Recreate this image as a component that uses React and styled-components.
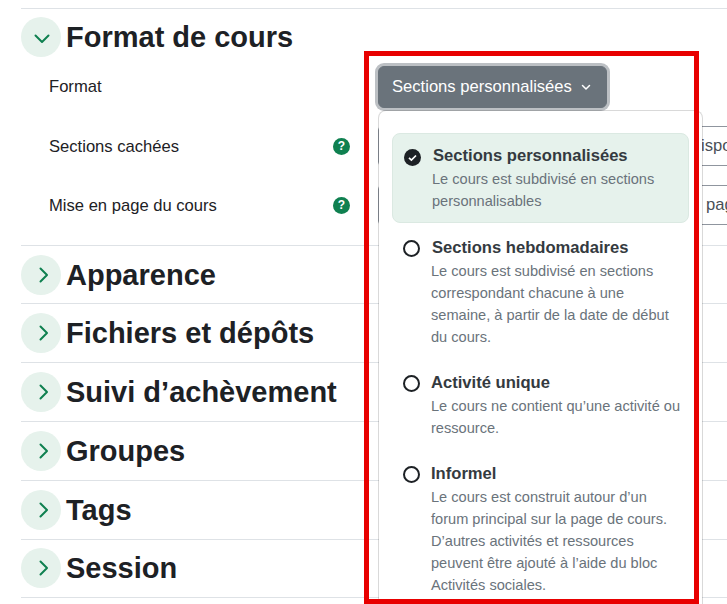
import React from "react";
import styled, { createGlobalStyle } from "styled-components";

const GlobalStyle = createGlobalStyle`
  html, body {
    margin: 0;
    padding: 0;
    background: #fff;
    overflow: hidden;
  }
  body {
    font-family: "Liberation Sans", Arial, sans-serif;
    color: #1d2125;
  }
`;

const Page = styled.div`
  position: relative;
  width: 727px;
  height: 604px;
  overflow: hidden;
  padding: 8px 0 0 21px;
  box-sizing: border-box;
`;

const Section = styled.section`
  border-top: 1px solid #dee2e6;
  height: ${(props) => props.$height}px;
  box-sizing: border-box;
`;

const SectionHead = styled.div`
  display: flex;
  align-items: flex-start;
  gap: 5px;
  padding-top: ${(props) => props.$top}px;
`;

const Toggle = styled.span`
  width: 40px;
  height: 40px;
  border-radius: 50%;
  background: #e6f2ec;
  color: #0f8050;
  display: flex;
  align-items: center;
  justify-content: center;
  flex: none;
`;

const ToggleIcon = styled.svg`
  margin: ${(props) => (props.$open ? "3px 0 0 1px" : "0 0 0 5px")};
`;

const SectionTitle = styled.h3`
  margin: 0;
  height: 40px;
  font-size: 29px;
  line-height: 41px;
  font-weight: 700;
  color: #1d2125;
`;

const Rows = styled.div`
  padding-top: 11px;
`;

const Row = styled.div`
  display: grid;
  grid-template-columns: 284px 45px 1fr;
  height: 59.5px;
  padding-left: 28px;
`;

const RowLabel = styled.div`
  font-size: 16.6px;
  line-height: 24px;
  padding-top: 7px;
`;

const HelpSlot = styled.div`
  padding-top: 10px;
`;

const HelpIcon = styled.span`
  width: 17px;
  height: 17px;
  border-radius: 50%;
  background: #0f8050;
  color: #fff;
  font-size: 12px;
  font-weight: 700;
  line-height: 17px;
  text-align: center;
  display: block;
`;

const SelectBox = styled.div`
  height: 40px;
  margin-top: -2px;
  width: 400px;
  box-sizing: border-box;
  border: 1px solid #8f959e;
  border-radius: 4px;
  font-size: 16.6px;
  line-height: 38px;
  padding-left: ${(props) => props.$inset}px;
  color: #495057;
  white-space: nowrap;
`;

const FormatButton = styled.button`
  position: absolute;
  left: 378px;
  top: 66px;
  width: 229px;
  height: 42px;
  border: 1px solid #6a737b;
  border-radius: 6px;
  background: #6a737b;
  box-shadow: 0 0 0 3px #bcc0c4;
  color: #fff;
  font-family: inherit;
  font-size: 16.6px;
  display: flex;
  align-items: center;
  gap: 9px;
  padding: 0 0 0 13px;
`;

const Menu = styled.div`
  position: absolute;
  left: 378px;
  top: 110px;
  width: 325px;
  height: 520px;
  box-sizing: border-box;
  background: #fff;
  background-clip: padding-box;
  border: 1px solid rgba(0, 0, 0, 0.15);
  border-radius: 8px;
  padding: 22px 13px 0;
`;

const Option = styled.div`
  display: grid;
  grid-template-columns: 28px 1fr;
  padding: ${(props) => (props.$active ? "10px 12px 10px 11px" : "0 0 0 10px")};
  margin-top: ${(props) => props.$gap}px;
  background: ${(props) => (props.$active ? "#e6f2ec" : "transparent")};
  border: 1px solid ${(props) => (props.$active ? "#dbe9e2" : "transparent")};
  border-radius: 8px;
`;

const Radio = styled.span`
  width: 17px;
  height: 17px;
  margin-top: 4px;
  border-radius: 50%;
  box-sizing: border-box;
  border: 2px solid #1d2125;
  display: block;
`;

const CheckedRadio = styled.svg`
  margin-top: 5px;
  display: block;
`;

const OptionTitle = styled.div`
  font-size: 16.6px;
  font-weight: 700;
  line-height: 24px;
  color: #343a40;
  padding-left: ${(props) => props.$inset}px;
`;

const OptionText = styled.div`
  font-size: 14.6px;
  line-height: 22px;
  color: #6a737b;
`;

const RedFrame = styled.div`
  position: absolute;
  left: 364px;
  top: 51px;
  width: 335px;
  height: 553px;
  box-sizing: border-box;
  border: 5px solid #e80000;
  pointer-events: none;
`;

const Chevron = ({ open }) => (
  <ToggleIcon $open={open} width="18" height="18" viewBox="0 0 18 18" fill="none" stroke="currentColor" strokeWidth="2" strokeLinecap="round" strokeLinejoin="round">
    {open ? <path d="M2.5 5.5L9 12l6.5-6.5" /> : <path d="M5.5 2.5L12 9l-6.5 6.5" />}
  </ToggleIcon>
);

const options = [
  { title: "Sections personnalisées", text: ["Le cours est subdivisé en sections", "personnalisables"], active: true, gap: 0, inset: 1 },
  { title: "Sections hebdomadaires", text: ["Le cours est subdivisé en sections", "correspondant chacune à une", "semaine, à partir de la date de début", "du cours."], gap: 12, inset: 1 },
  { title: "Activité unique", text: ["Le cours ne contient qu’une activité ou", "ressource."], gap: 21, inset: 0 },
  { title: "Informel", text: ["Le cours est construit autour d’un", "forum principal sur la page de cours.", "D’autres activités et ressources", "peuvent être ajouté à l’aide du bloc", "Activités sociales."], gap: 21, inset: 0 },
];

const closedSections = [
  { title: "Apparence", height: 58, top: 9 },
  { title: "Fichiers et dépôts", height: 59, top: 9 },
  { title: "Suivi d’achèvement", height: 59, top: 9 },
  { title: "Groupes", height: 59, top: 9 },
  { title: "Tags", height: 59, top: 9 },
  { title: "Session", height: 58, top: 8 },
];

export default function App() {
  return (
    <>
      <GlobalStyle />
      <Page>
        <Section $height={237}>
          <SectionHead $top={8}>
            <Toggle><Chevron open /></Toggle>
            <SectionTitle>Format de cours</SectionTitle>
          </SectionHead>
          <Rows>
            <Row>
              <RowLabel>Format</RowLabel>
            </Row>
            <Row>
              <RowLabel>Sections cachées</RowLabel>
              <HelpSlot><HelpIcon>?</HelpIcon></HelpSlot>
              <SelectBox $inset={322}>isponibles</SelectBox>
            </Row>
            <Row>
              <RowLabel>Mise en page du cours</RowLabel>
              <HelpSlot><HelpIcon>?</HelpIcon></HelpSlot>
              <SelectBox $inset={327}>page</SelectBox>
            </Row>
          </Rows>
        </Section>
        {closedSections.map((section) => (
          <Section key={section.title} $height={section.height}>
            <SectionHead $top={section.top}>
              <Toggle><Chevron /></Toggle>
              <SectionTitle>{section.title}</SectionTitle>
            </SectionHead>
          </Section>
        ))}
        <Section $height={10} />
        <FormatButton>
          Sections personnalisées
          <svg width="10" height="10" viewBox="0 0 10 10" fill="none" stroke="currentColor" strokeWidth="1.5" strokeLinecap="round" strokeLinejoin="round">
            <path d="M1.5 3.5L5 7l3.5-3.5" />
          </svg>
        </FormatButton>
        <Menu>
          {options.map((option) => (
            <Option key={option.title} $active={option.active} $gap={option.gap}>
              {option.active ? (
                <CheckedRadio width="17" height="17" viewBox="0 0 17 17">
                  <circle cx="8.5" cy="8.5" r="8.5" fill="#1d2125" />
                  <path d="M5 8.8l2.4 2.3L12 6.5" fill="none" stroke="#fff" strokeWidth="1.7" />
                </CheckedRadio>
              ) : (
                <Radio />
              )}
              <div>
                <OptionTitle $inset={option.inset}>{option.title}</OptionTitle>
                <OptionText>
                  {option.text.map((line) => (
                    <div key={line}>{line}</div>
                  ))}
                </OptionText>
              </div>
            </Option>
          ))}
        </Menu>
        <RedFrame />
      </Page>
    </>
  );
}
